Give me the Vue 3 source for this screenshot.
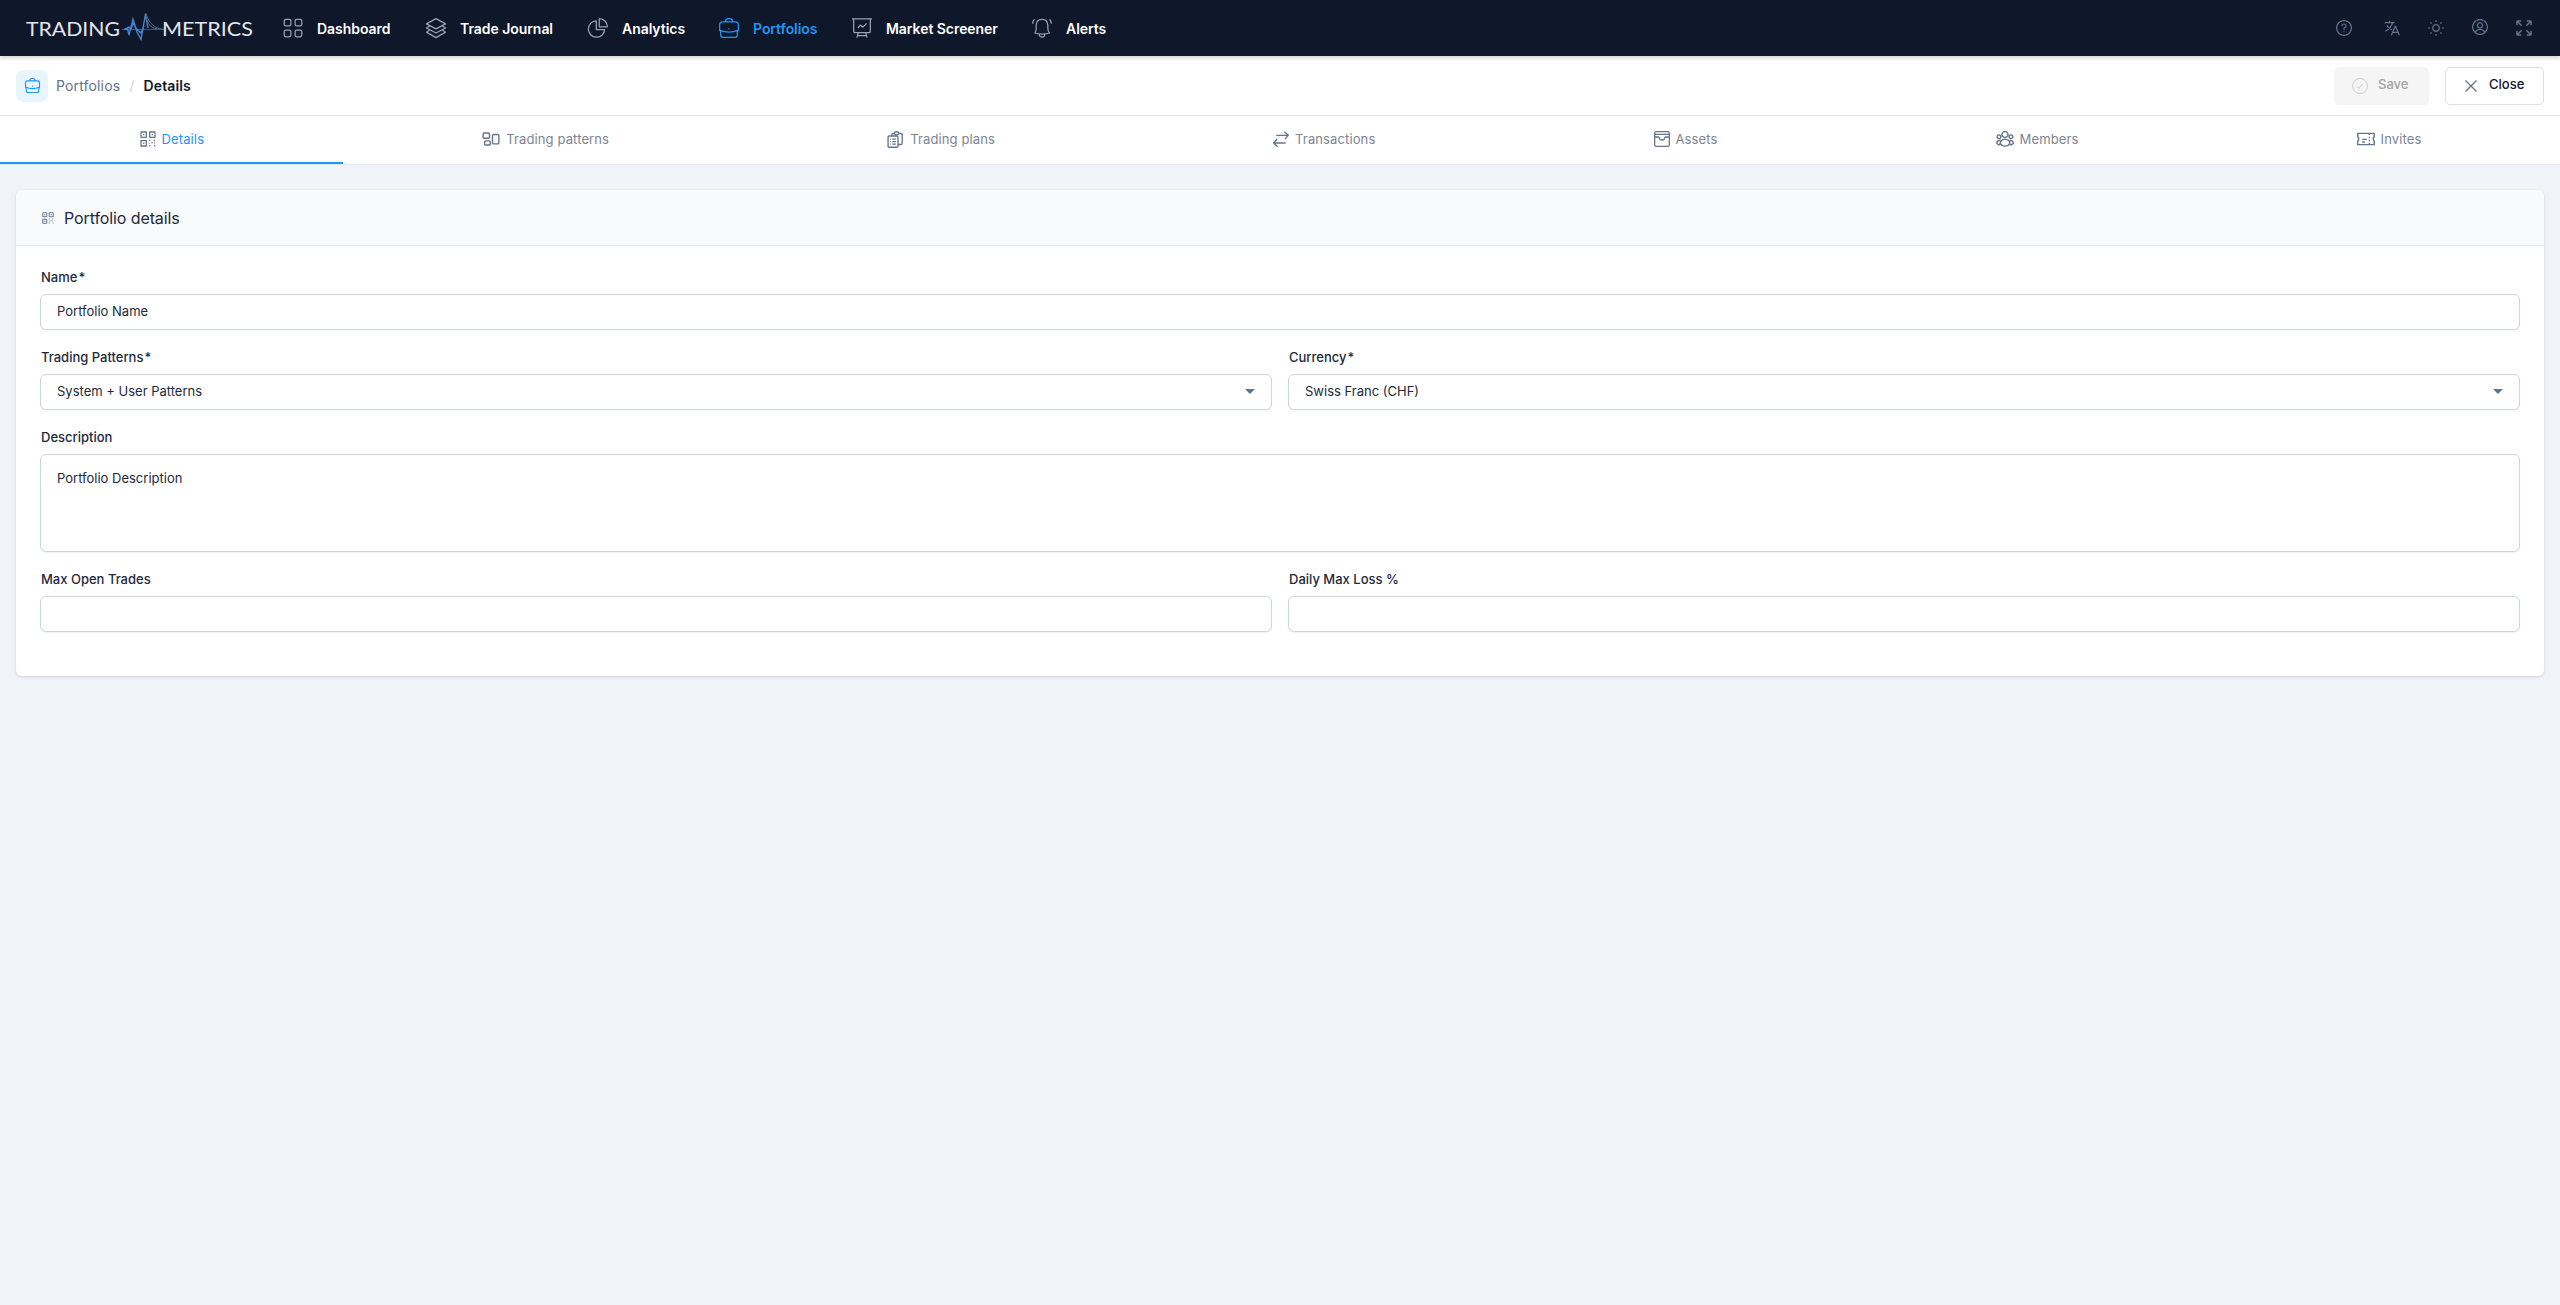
<template>
    <div class="page">
        <header class="navbar">
            <svg class="logo" width="226" height="36" viewBox="0 0 226 36">
                <text x="-1" y="26" textLength="94" lengthAdjust="spacingAndGlyphs">TRADING</text>
                <path class="wave-line" d="M95 19.500H136" />
                <path class="wave" d="M97 19.500L100.500 18L102 25L106 9L110 22L114 29.500L118.500 4L121 18" />
                <path class="wave" d="M99 20L102 17L104 19L106 13L109.500 19L114 23L117 16" />
                <path class="wave-tail" d="M118.500 3C121 8 123 18 137 19.500M119 8C121 13 123 18 130 19" />
                <text x="135" y="26" textLength="91" lengthAdjust="spacingAndGlyphs">METRICS</text>
            </svg>
            <nav class="nav">
                <a v-for="item in navItems" :key="item.label" class="nav-item" :class="{ active: item.active }">
                    <Icon :name="item.icon" class="nav-icon" />
                    <span>{{ item.label }}</span>
                </a>
            </nav>
            <div class="nav-tools">
                <Icon v-for="name in tools" :key="name" :name="name" class="tool-icon" :class="name" />
            </div>
        </header>

        <div class="toolbar">
            <div class="badge"><Icon name="briefcase" /></div>
            <div class="breadcrumb">
                <span>Portfolios</span>
                <span class="slash">/</span>
                <strong>Details</strong>
            </div>
            <button class="btn save" disabled><Icon name="check" /><span>Save</span></button>
            <button class="btn close"><Icon name="cross" /><span>Close</span></button>
        </div>

        <div class="tabs">
            <a v-for="tab in tabs" :key="tab.label" class="tab" :class="{ active: tab.label === 'Details' }">
                <Icon :name="tab.icon" class="tab-icon" :class="tab.icon" />
                <span>{{ tab.label }}</span>
            </a>
        </div>

        <main class="card">
            <div class="card-header">
                <Icon name="qr" />
                <h2>Portfolio details</h2>
            </div>
            <form class="form">
                <div class="field wide">
                    <label>Name<i>*</i></label>
                    <div class="control">{{ form.name }}</div>
                </div>
                <div class="field">
                    <label>Trading Patterns<i>*</i></label>
                    <div class="control select">{{ form.patterns }}</div>
                </div>
                <div class="field">
                    <label>Currency<i>*</i></label>
                    <div class="control select">{{ form.currency }}</div>
                </div>
                <div class="field wide">
                    <label>Description</label>
                    <div class="control textarea">{{ form.description }}</div>
                </div>
                <div class="field">
                    <label>Max Open Trades</label>
                    <div class="control"></div>
                </div>
                <div class="field">
                    <label>Daily Max Loss %</label>
                    <div class="control"></div>
                </div>
            </form>
        </main>
    </div>
</template>

<script setup>
import { h, reactive } from 'vue';

// All icons are stroked paths on a 24x24 grid
const paths = {
    grid: 'M3.500 1.500h4q2 0 2 2v4q0 2-2 2h-4q-2 0-2-2v-4q0-2 2-2zM16.500 1.500h4q2 0 2 2v4q0 2-2 2h-4q-2 0-2-2v-4q0-2 2-2zM3.500 14.500h4q2 0 2 2v4q0 2-2 2h-4q-2 0-2-2v-4q0-2 2-2zM16.500 14.500h4q2 0 2 2v4q0 2-2 2h-4q-2 0-2-2v-4q0-2 2-2z',
    layers: 'M12 .8L23.500 7L12 13L.5 7zM4.500 9.500L.5 12L12 18L23.500 12L19.500 9.500M4.500 14.500L.5 17L12 23.500L23.500 17L19.500 14.500',
    pie: 'M10 3.500A9.800 9.800 0 1 0 20 14H10zM13.500 .8V10.500H23.200C23.200 5 19 .8 13.500 .8z',
    briefcase: 'M4 4.500H20Q23.200 4.500 23.200 8V15Q22 16 22 17V20Q22 23.200 19 23.200H5Q2 23.200 2 20V17Q2 16 .8 15V8Q.8 4.500 4 4.500zM7.500 4.500Q8 .8 11 .8H13Q16 .8 16.500 4.500M.8 14.500Q6 17 12 17T23.200 14.500M11.300 13H12.700',
    board: 'M0 1H24M2 1V16Q2 17.500 3.500 17.500H20.500Q22 17.500 22 16V1M7 12L10 8.500L13 11L17.500 6.500M7.500 17.500L6 23.500M16.500 17.500L18 23.500M7 21H17',
    bell: 'M3.500 18Q5 16 5 12V8.500Q5.500 1.500 12 1.500T19 8.500V12Q19 16 21 18Q17 19.200 12 19.200T3.500 18zM8.500 19.500Q9 23 12 23T15.500 19.500M3 1.500Q.8 3.500.8 7M21 1.500Q23.200 3.500 23.200 7',
    help: 'M12 1a11 11 0 1 0 .01 0zM9 9Q9 6 12 6T15 9Q15 11 12 12V14.500M12 17V18.300',
    translate: 'M1 4H16M8.500 1V4M13 4Q11 12 2 17M4 8Q7 12 12 15M11 23L17 9L23 23M13 18.500H21',
    sun: 'M12 7a5 5 0 1 0 .01 0zM12 0V3M12 21V24M0 12H3M21 12H24M3.500 3.500L5.500 5.500M18.500 18.500L20.500 20.500M3.500 20.500L5.500 18.500M18.500 5.500L20.500 3.500',
    user: 'M12 1a11 11 0 1 0 .01 0zM12 5.500a4 4 0 1 0 .01 0zM4.500 19.500Q8 15.500 12 15.500T19.500 19.500',
    expand: 'M1.500 8V1.500H8M1.500 1.500L8.500 8.500M16 1.500H22.500V8M22.500 1.500L15.500 8.500M1.500 16V22.500H8M1.500 22.500L8.500 15.500M16 22.500H22.500V16M22.500 22.500L15.500 15.500',
    check: 'M12 .8a11.200 11.200 0 1 0 .01 0zM7.500 12.500L10.500 15.500L16 9',
    cross: 'M1 1L23 23M23 1L1 23',
    qr: 'M1.500 1.500H9.500V9.500H1.500zM14.500 1.500H22.500V9.500H14.500zM1.500 14.500H9.500V22.500H1.500zM4.500 5.500H6.500M17.500 5.500H19.500M4.500 18.500H6.500M13.500 14H15.500M20.500 14H22.500M17 17.500H19M13.500 22H15.500M21 22H23M21 18H22M14 18.500H15',
    patterns: 'M3 4H8.500Q10 4 10 5.500V9.500Q10 11 8.500 11H3Q1.500 11 1.500 9.500V5.500Q1.500 4 3 4zM5 14.500H9.500Q11 14.500 11 16V18.500Q11 20 9.500 20H5Q3.500 20 3.500 18.500V16Q3.500 14.500 5 14.500zM15.500 6H21Q22.500 6 22.500 7.500V17Q22.500 18.500 21 18.500H15.500Q14 18.500 14 17V7.500Q14 6 15.500 6z',
    clipboard: 'M3 7H14Q15.500 7 15.500 8.500V21.500Q15.500 23 14 23H3Q1.500 23 1.500 21.500V8.500Q1.500 7 3 7zM7 7V5Q7 3.500 8.500 3.500H10Q10.500 1 13.500 1T17 3.500H20Q21.500 3.500 21.500 5V17Q21.500 19 20 19H15.500M10 3.500Q11 5.500 13.500 5.500T17 3.500M4.500 11.500H5.500M7.500 11.500H12.500M4.500 15H5.500M7.500 15H12.500M4.500 18.500H5.500M7.500 18.500H12.500',
    swap: 'M5 6.500H23M17 1L23 6.500L18 12M19 18H1M6 12L1 18L7 23.500',
    box: 'M3.500 1H20.500Q23 1 23 3.500V20.500Q23 23 20.500 23H3.500Q1 23 1 20.500V3.500Q1 1 3.500 1zM1 5H23M1 9H6.500Q8 9 8 11Q8.500 13.500 12 13.500T16 11Q16 9 17.500 9H23',
    members: 'M12 2a4 4 0 1 0 .01 0zM4 6.500a2.500 2.500 0 1 0 .01 0zM20 6.500a2.500 2.500 0 1 0 .01 0zM5.500 18Q6 12.500 12 12.500T18.500 18L16 20.500Q12 22.500 8 20.500zM6 14Q1 13.500 1 18L4 20L6 18M18 14Q23 13.500 23 18L20 20L18 18',
    ticket: 'M1 4.500H23V8.500Q20.500 12 23 15.500V19.500H1V15.500Q3.500 12 1 8.500zM16.500 5V6.500M16.500 9V10.500M16.500 13V14.500M16.500 17V18.500M7 12.500H13M7 16H10.500',
};

const Icon = ({ name }) => h('svg', { class: 'icon', viewBox: '0 0 24 24' }, [h('path', { d: paths[name] })]);
Icon.props = ['name'];

const navItems = [
    { label: 'Dashboard', icon: 'grid' },
    { label: 'Trade Journal', icon: 'layers' },
    { label: 'Analytics', icon: 'pie' },
    { label: 'Portfolios', icon: 'briefcase', active: true },
    { label: 'Market Screener', icon: 'board' },
    { label: 'Alerts', icon: 'bell' },
];

const tools = ['help', 'translate', 'sun', 'user', 'expand'];

const tabs = [
    { label: 'Details', icon: 'qr' },
    { label: 'Trading patterns', icon: 'patterns' },
    { label: 'Trading plans', icon: 'clipboard' },
    { label: 'Transactions', icon: 'swap' },
    { label: 'Assets', icon: 'box' },
    { label: 'Members', icon: 'members' },
    { label: 'Invites', icon: 'ticket' },
];

const form = reactive({
    name: 'Portfolio Name',
    patterns: 'System + User Patterns',
    currency: 'Swiss Franc (CHF)',
    description: 'Portfolio Description',
});
</script>

<style>
body {
    background: #f0f3f8;
}
</style>

<style scoped>
.page {
    min-height: 100vh;
    font-family: Inter, 'Liberation Sans', sans-serif;
    font-size: 13px;
    color: #1e293b;
}

.page * {
    box-sizing: border-box;
}

.icon {
    flex: none;
    display: block;
    width: 16px;
    height: 16px;
    overflow: visible;
    fill: none;
    stroke: currentColor;
    stroke-width: 1.5;
    stroke-linejoin: round;
}

/* Top bar */
.navbar {
    position: relative;
    display: flex;
    align-items: center;
    height: 56px;
    padding: 0 28px 0 27px;
    background: #0f172a;
    box-shadow: 0 2px 4px #00000030;
}

.logo {
    overflow: visible;
    font-family: Lato, sans-serif;
    font-size: 20px;
    fill: #e4e6ea;
}

.wave, .wave-line, .wave-tail {
    fill: none;
    stroke-width: 1;
}

.wave { stroke: #4683cf; stroke-width: 1.4; }
.wave-line { stroke: #3c5578; }
.wave-tail { stroke: #65738a; }

.nav {
    display: grid;
    grid-template-columns: 143px 162px 131px 133px 180px auto;
    margin-left: 30px;
}

.nav-item {
    display: flex;
    align-items: center;
    gap: 14px;
    color: #fff;
    font-size: 14px;
    font-weight: 600;
    letter-spacing: -0.05px;
    white-space: nowrap;
}

.nav-item span {
    padding-top: 1px;
}

.nav-icon {
    width: 20px;
    height: 20px;
    color: #94a3b8;
}

.nav-item.active,
.nav-item.active .nav-icon {
    color: #2196f3;
}

.nav-tools {
    display: flex;
    align-items: center;
    gap: 28px;
    margin-left: auto;
}

.tool-icon {
    color: #64748b;
    stroke-width: 1.8;
}

.tool-icon.help { margin-right: 4px; }
.tool-icon.user { margin-top: -2px; }
.tool-icon.expand { stroke-width: 2.2; }

/* Breadcrumb bar */
.toolbar {
    display: flex;
    align-items: center;
    height: 60px;
    padding: 0 16px;
    border-bottom: 1px solid #e2e8f0;
    background: #fff;
}

.badge {
    display: flex;
    align-items: center;
    justify-content: center;
    width: 32px;
    height: 32px;
    border-radius: 8px;
    background: #e8f4fe;
    color: #2196f3;
}

.badge .icon {
    width: 15px;
    height: 15px;
    stroke-width: 1.8;
}

.breadcrumb {
    display: flex;
    gap: 9px;
    margin: 0 auto 0 8px;
    font-size: 14px;
    letter-spacing: 0.15px;
    color: #64748b;
}

.breadcrumb strong {
    color: #0f172a;
    font-weight: 600;
}

.slash { color: #cbd5e1; }

.btn {
    display: flex;
    align-items: center;
    height: 38px;
    border-radius: 5px;
    font: 500 13px Inter, sans-serif;
}

.btn span {
    padding-bottom: 3px;
}

.save {
    width: 95px;
    gap: 10px;
    padding: 0 17px;
    border: 1px solid #f5f5f5;
    background: #f5f5f5;
    color: #a3a3a3;
}

.save .icon { color: #cfcfcf; }

.close {
    width: 99px;
    gap: 12px;
    margin-left: 16px;
    padding: 0 19px;
    border: 1px solid #dcdfe3;
    background: #fff;
    color: #0f172a;
}

.close .icon {
    width: 12px;
    height: 12px;
    color: #64748b;
    stroke-width: 2.6;
}

/* Tabs */
.tabs {
    display: flex;
    height: 49px;
    border-bottom: 1px solid #e2e8f0;
    background: #fff;
}

.tab {
    flex: 1 1 auto;
    display: flex;
    align-items: center;
    justify-content: center;
    gap: 6px;
    border-bottom: 2px solid transparent;
    padding-left: 1px;
    color: #7d8593;
    letter-spacing: 0.12px;
}

.tab span { padding-bottom: 1px; }

.tab-icon {
    color: #64748b;
    stroke-width: 1.9;
}

.tab-icon.patterns,
.tab-icon.members,
.tab-icon.ticket {
    width: 18px;
    height: 18px;
}

.tab-icon.clipboard {
    width: 17px;
    height: 17px;
}

.tab.active {
    border-bottom-color: #2196f3;
    color: #2196f3;
}

/* Card */
.card {
    height: 486px;
    margin: 25px 16px 0;
    border-radius: 6px;
    background: #fff;
    box-shadow: 0 1px 3px #0f172a26;
    overflow: hidden;
}

.card-header {
    display: flex;
    align-items: center;
    gap: 10px;
    height: 56px;
    padding: 0 26px;
    border-bottom: 1px solid #e2e8f0;
    background: #f8fafc;
}

.card-header .icon {
    width: 12px;
    height: 12px;
    color: #64748b;
    stroke-width: 2;
}

.card-header h2 {
    margin: 0;
    font-size: 16px;
    font-weight: 400;
    letter-spacing: -0.1px;
}

.form {
    display: grid;
    grid-template-columns: 1fr 1fr;
    gap: 20px 16px;
    padding: 24px;
}

.wide { grid-column: 1 / -1; }

.field label {
    display: block;
    height: 24px;
    padding-left: 1px;
    font-weight: 500;
    line-height: 14px;
}

.field i {
    margin-left: 1px;
    font-style: normal;
}

.control {
    display: flex;
    align-items: center;
    height: 36px;
    padding: 0 16px 2px;
    border: 1px solid #cbd5e1;
    border-radius: 6px;
    background: #fff;
    box-shadow: 0 1px 2px #0000000d;
}

.select {
    justify-content: space-between;
}

.select::after {
    content: '';
    border: 5px solid transparent;
    border-top-color: #64748b;
    border-bottom: 0;
}

.textarea {
    align-items: flex-start;
    height: 98px;
    padding-top: 15px;
}
</style>
